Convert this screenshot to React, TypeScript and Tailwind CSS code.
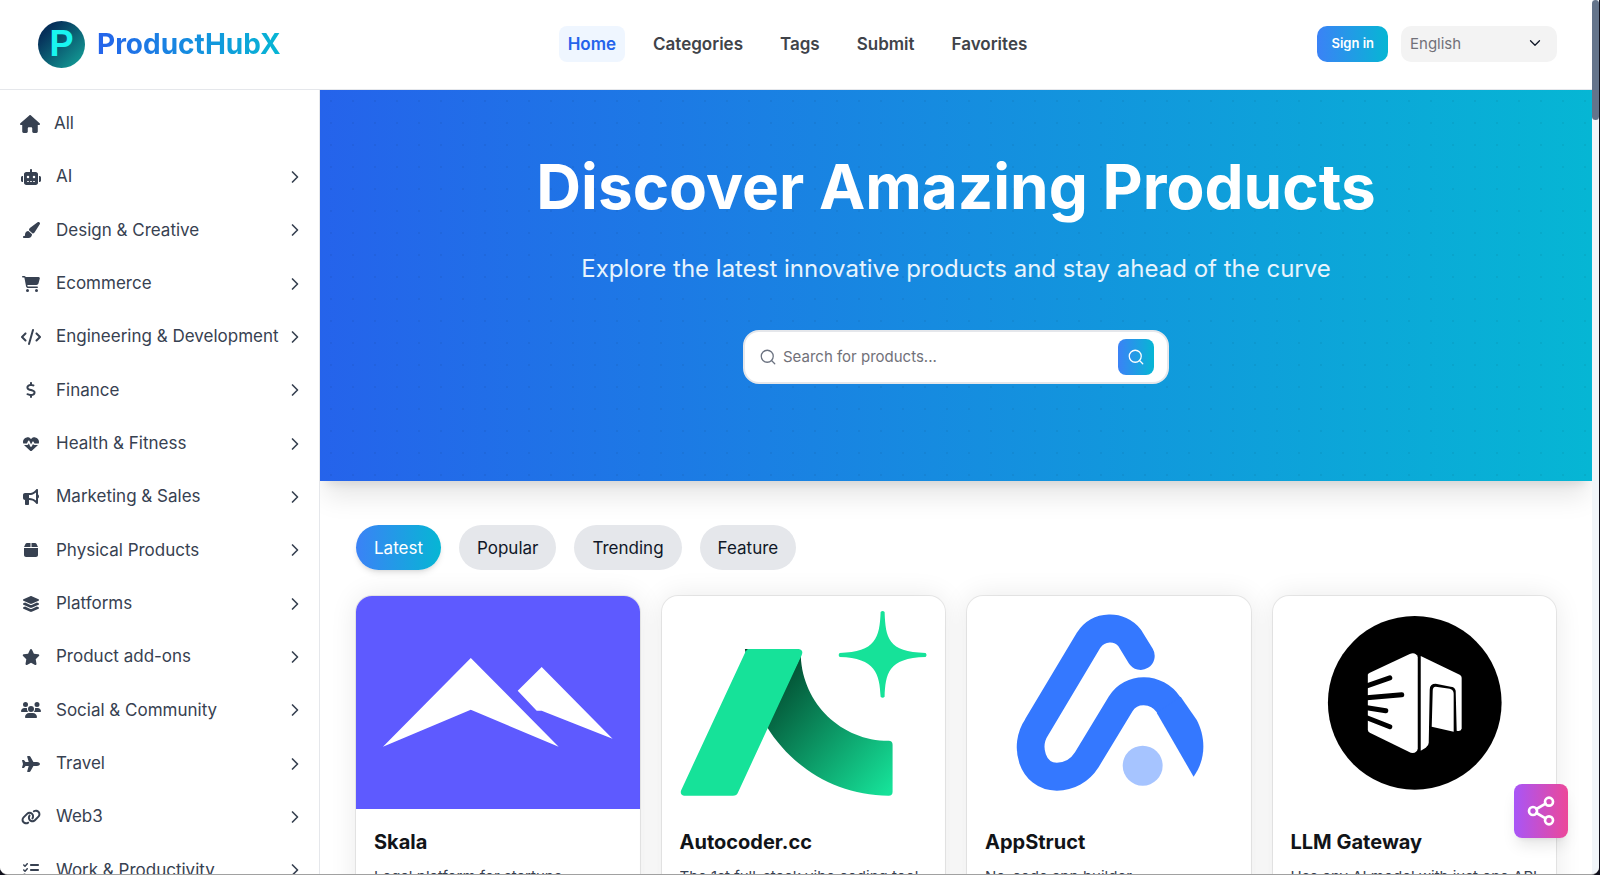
import React, { useState } from 'react';
import type { IconType } from 'react-icons';
import {
  FaBox,
  FaBullhorn,
  FaCartShopping,
  FaCode,
  FaDollarSign,
  FaHeartPulse,
  FaHouse,
  FaLayerGroup,
  FaLink,
  FaListCheck,
  FaPaintbrush,
  FaPlane,
  FaRobot,
  FaStar,
  FaUsers,
} from 'react-icons/fa6';
import { ChevronDown, ChevronRight, Search, Share2 } from 'lucide-react';

interface Category {
  name: string;
  icon: IconType;
}

interface Product {
  name: string;
  description: string;
  logo: React.ReactNode;
}

const navLinks = ['Home', 'Categories', 'Tags', 'Submit', 'Favorites'];

const tabs = ['Latest', 'Popular', 'Trending', 'Feature'];

const categories: Category[] = [
  { name: 'AI', icon: FaRobot },
  { name: 'Design & Creative', icon: FaPaintbrush },
  { name: 'Ecommerce', icon: FaCartShopping },
  { name: 'Engineering & Development', icon: FaCode },
  { name: 'Finance', icon: FaDollarSign },
  { name: 'Health & Fitness', icon: FaHeartPulse },
  { name: 'Marketing & Sales', icon: FaBullhorn },
  { name: 'Physical Products', icon: FaBox },
  { name: 'Platforms', icon: FaLayerGroup },
  { name: 'Product add-ons', icon: FaStar },
  { name: 'Social & Community', icon: FaUsers },
  { name: 'Travel', icon: FaPlane },
  { name: 'Web3', icon: FaLink },
  { name: 'Work & Productivity', icon: FaListCheck },
];

function SkalaLogo() {
  return (
    <svg viewBox="0 0 284 213" className="h-full w-full bg-[#5e5aff]" aria-hidden="true">
      <path d="M115 62 L203 151 L115 114 L27 151 Z" fill="#fff" />
      <path d="M186 71 L257 143 L186 115 L181 115 L162 95 Z" fill="#fff" />
    </svg>
  );
}

function AutocoderLogo() {
  return (
    <svg viewBox="0 0 284 213" className="h-full w-full" aria-hidden="true">
      <defs>
        <linearGradient id="autocoder-arc" x1="110" y1="90" x2="228" y2="195" gradientUnits="userSpaceOnUse">
          <stop offset="0" stopColor="#035134" />
          <stop offset="1" stopColor="#16e299" />
        </linearGradient>
      </defs>
      <path d="M83 53 H92 L84 58 Z" fill="#04452d" />
      <path
        d="M139 60 C141 108 180 145 227 145 Q231 145 231 149 V196 Q231 200 227 200 C176 200 131 173 105 131 Z"
        fill="url(#autocoder-arc)"
      />
      <path
        d="M86 53 H137 Q142 54 140 59 L76 197 Q75 200 71 200 H22 Q18 199 19 195 L84 55 Z"
        fill="#16e299"
      />
      <path
        d="M219 16 Q221 14 223 16 C224 42 226 56 264 57 Q266 59 264 61 C226 62 224 78 223 101 Q221 103 219 101 C218 78 214 62 178 61 Q176 59 178 57 C214 56 218 42 219 16 Z"
        fill="#16e299"
      />
    </svg>
  );
}

function AppStructLogo() {
  return (
    <svg viewBox="0 0 284 213" className="h-full w-full" aria-hidden="true">
      <path
        d="M174 60 L163 42 C153 29 132 29 122 44 L70 131 C57 150 65 181 90 181 C102 181 113 175 120 164 L154 108 C164 91 190 91 202 109"
        fill="none"
        stroke="#3478ff"
        strokeWidth="28"
        strokeLinecap="round"
        strokeLinejoin="round"
      />
      <path d="M214 101 L230 124 C239 141 240 163 227 181 L190 117 Z" fill="#3478ff" />
      <circle cx="176" cy="170" r="20" fill="#a6c4ff" />
    </svg>
  );
}

function LlmGatewayLogo() {
  return (
    <svg viewBox="0 0 284 213" className="h-full w-full" aria-hidden="true">
      <circle cx="142" cy="107" r="87" fill="#000" />
      <path
        d="M95 79 Q95 78 97 77 L137 58 Q143 56 145 61 V153 Q144 158 138 157 L97 137 Q95 136 95 134 Z"
        fill="#fff"
      />
      <g stroke="#000" strokeWidth="5" strokeLinecap="round">
        <path d="M94 90 L117 82" />
        <path d="M94 102 L129 99" />
        <path d="M94 112 L113 115" />
        <path d="M94 122 L117 131" />
      </g>
      <path
        d="M148 60 L187 79 Q189 80 189 82 V133 Q188 136 184 135 L183 95 Q182 91 178 91 L163 88 Q157 88 157 94 L156 147 Q156 150 153 152 L148 155 Z"
        fill="#fff"
      />
      <path d="M160 95 Q160 91 163 91 L177 93 Q181 94 181 98 L181 136 L159 131 Z" fill="#fff" />
    </svg>
  );
}

const products: Product[] = [
  { name: 'Skala', description: 'Legal platform for startups', logo: <SkalaLogo /> },
  { name: 'Autocoder.cc', description: 'The 1st full-stack vibe coding tool', logo: <AutocoderLogo /> },
  { name: 'AppStruct', description: 'No-code app builder', logo: <AppStructLogo /> },
  { name: 'LLM Gateway', description: 'Use any AI model with just one API', logo: <LlmGatewayLogo /> },
];

function BrandMark() {
  return (
    <span className="flex size-[47px] items-center justify-center rounded-full bg-linear-to-br/srgb from-[#06305a] from-20% to-[#14a89c] font-['Liberation_Sans'] text-4xl leading-none font-bold text-[#19f5f0]">
      P
    </span>
  );
}

function Header() {
  return (
    <header className="grid h-[90px] shrink-0 grid-cols-[1fr_auto_1fr] items-center border-b border-gray-200 bg-white pr-[35px] pb-px pl-[38px]">
      <a href="#" className="flex items-center gap-3">
        <BrandMark />
        <span className="bg-linear-to-r/srgb from-[#2563eb] to-[#06b6d4] bg-clip-text text-[28px] leading-9 font-bold text-transparent">
          ProductHubX
        </span>
      </a>

      <nav className="flex items-center gap-[19px]">
        {navLinks.map((link, index) => (
          <a
            key={link}
            href="#"
            className={
              index === 0
                ? 'rounded-lg bg-[#eff6ff] px-[9px] py-1 text-[17px] leading-7 font-semibold text-[#2563eb]'
                : 'rounded-lg px-[9px] py-1 text-[17px] leading-7 font-semibold text-[#404349]'
            }
          >
            {link}
          </a>
        ))}
      </nav>

      <div className="flex items-center justify-end gap-[13px]">
        <button className="h-9 rounded-[10px] bg-linear-to-r/srgb from-[#3b82f6] to-[#06b6d4] px-[14px] text-[13px] font-semibold text-white">
          Sign in
        </button>
        <div className="relative">
          <select
            aria-label="Language"
            className="h-9 w-[156px] appearance-none rounded-[10px] bg-[#f3f3f3] px-[9px] text-[15px] text-[#717179]"
          >
            <option>English</option>
          </select>
          <ChevronDown
            className="pointer-events-none absolute top-2 right-[13px] size-[18px] text-gray-900"
            strokeWidth={1.7}
          />
        </div>
      </div>
    </header>
  );
}

function Sidebar() {
  return (
    <aside className="w-80 shrink-0 overflow-hidden border-r border-gray-200 bg-white pt-[7px]">
      <ul className="flex min-h-[800px] flex-col text-[17px] text-[#374151]">
        <li className="flex flex-1 items-center">
          <a href="#" className="flex w-full items-center gap-[14px] pl-5">
            <FaHouse className="h-[18px] w-5" />
            All
          </a>
        </li>
        {categories.map(({ name, icon: Icon }) => (
          <li key={name} className="flex flex-1 items-center">
            <a href="#" className="flex w-full items-center pr-[14px] pl-[21px]">
              <Icon className="mr-[15px] h-4 w-5" />
              {name}
              <ChevronRight className="ml-auto size-5" />
            </a>
          </li>
        ))}
      </ul>
    </aside>
  );
}

function Hero() {
  return (
    <section className="bg-linear-to-r/srgb from-[#2563eb] to-[#06b6d4] shadow-xl">
      <div className="flex flex-col items-center bg-[radial-gradient(circle,rgba(0,0,0,0.05)_1px,transparent_1px)] bg-size-[22px_22px] px-8 pt-[60px] pb-[97px] text-center text-white">
        <h1 className="text-[62px] leading-[74px] font-bold">Discover Amazing Products</h1>
        <p className="mt-[27px] text-2xl leading-9 text-[#e8f4fd]">
          Explore the latest innovative products and stay ahead of the curve
        </p>
        <form
          className="mt-[43px] flex h-[54px] w-full max-w-[426px] items-center gap-[6px] rounded-2xl border-2 border-gray-200 bg-white pr-[13px] pl-[14px]"
          onSubmit={(e) => e.preventDefault()}
        >
          <Search className="size-[18px] text-[#6b7280]" strokeWidth={1.7} />
          <input
            type="search"
            aria-label="Search for products"
            placeholder="Search for products..."
            className="min-w-0 flex-1 text-[15px] text-gray-900 outline-none placeholder:text-[#717179]"
          />
          <button
            aria-label="Search"
            className="flex size-9 items-center justify-center rounded-lg bg-linear-to-r/srgb from-[#3b82f6] to-[#06b6d4] text-white"
          >
            <Search className="size-[18px]" strokeWidth={1.7} />
          </button>
        </form>
      </div>
    </section>
  );
}

function ProductCard({ product }: { product: Product }) {
  return (
    <article className="overflow-hidden rounded-2xl bg-white shadow-[0_0_0_1px_rgba(0,0,0,0.07),0_0_28px_rgba(0,0,0,0.09)]">
      <div className="aspect-4/3">{product.logo}</div>
      <div className="px-[18px] py-[17px]">
        <h2 className="text-[20px] leading-8 font-bold text-[#111418]">{product.name}</h2>
        <p className="mt-[7px] truncate text-[15px] leading-6 text-[#374151]">{product.description}</p>
      </div>
    </article>
  );
}

export default function App() {
  const [activeTab, setActiveTab] = useState('Latest');

  return (
    <div className="h-screen bg-[#10101c] pr-px font-[Inter,sans-serif]">
      <div className="flex h-full overflow-hidden rounded-b-lg border-b border-neutral-400 bg-white">
        <div className="flex min-w-0 flex-1 flex-col">
          <Header />
          <div className="flex min-h-0 flex-1">
            <Sidebar />
            <main className="min-w-0 flex-1 overflow-hidden">
              <Hero />
              <div className="px-9 pt-11">
                <div className="flex gap-[18px]">
                  {tabs.map((tab) => (
                    <button
                      key={tab}
                      onClick={() => setActiveTab(tab)}
                      className={
                        tab === activeTab
                          ? 'h-[45px] rounded-full bg-linear-to-r/srgb from-[#3b82f6] to-[#06b6d4] px-[18px] text-[17px] leading-7 text-white shadow-md'
                          : 'h-[45px] rounded-full bg-gray-200 px-[18px] text-[17px] leading-7 text-gray-900'
                      }
                    >
                      {tab}
                    </button>
                  ))}
                </div>
                <div className="mt-[26px] grid grid-cols-4 gap-[22px]">
                  {products.map((product) => (
                    <ProductCard key={product.name} product={product} />
                  ))}
                </div>
              </div>
            </main>
          </div>
        </div>

        {/* Scroll track */}
        <div className="w-[7px] shrink-0 bg-slate-100">
          <div className="h-[120px] rounded-full bg-[#64748b]" />
        </div>
      </div>

      <button
        aria-label="Share"
        className="fixed right-8 bottom-[37px] flex size-[54px] items-center justify-center rounded-lg bg-linear-to-r/srgb from-[#a855f7] to-[#ec4899] text-white shadow-lg"
      >
        <Share2 className="size-8" />
      </button>
    </div>
  );
}
